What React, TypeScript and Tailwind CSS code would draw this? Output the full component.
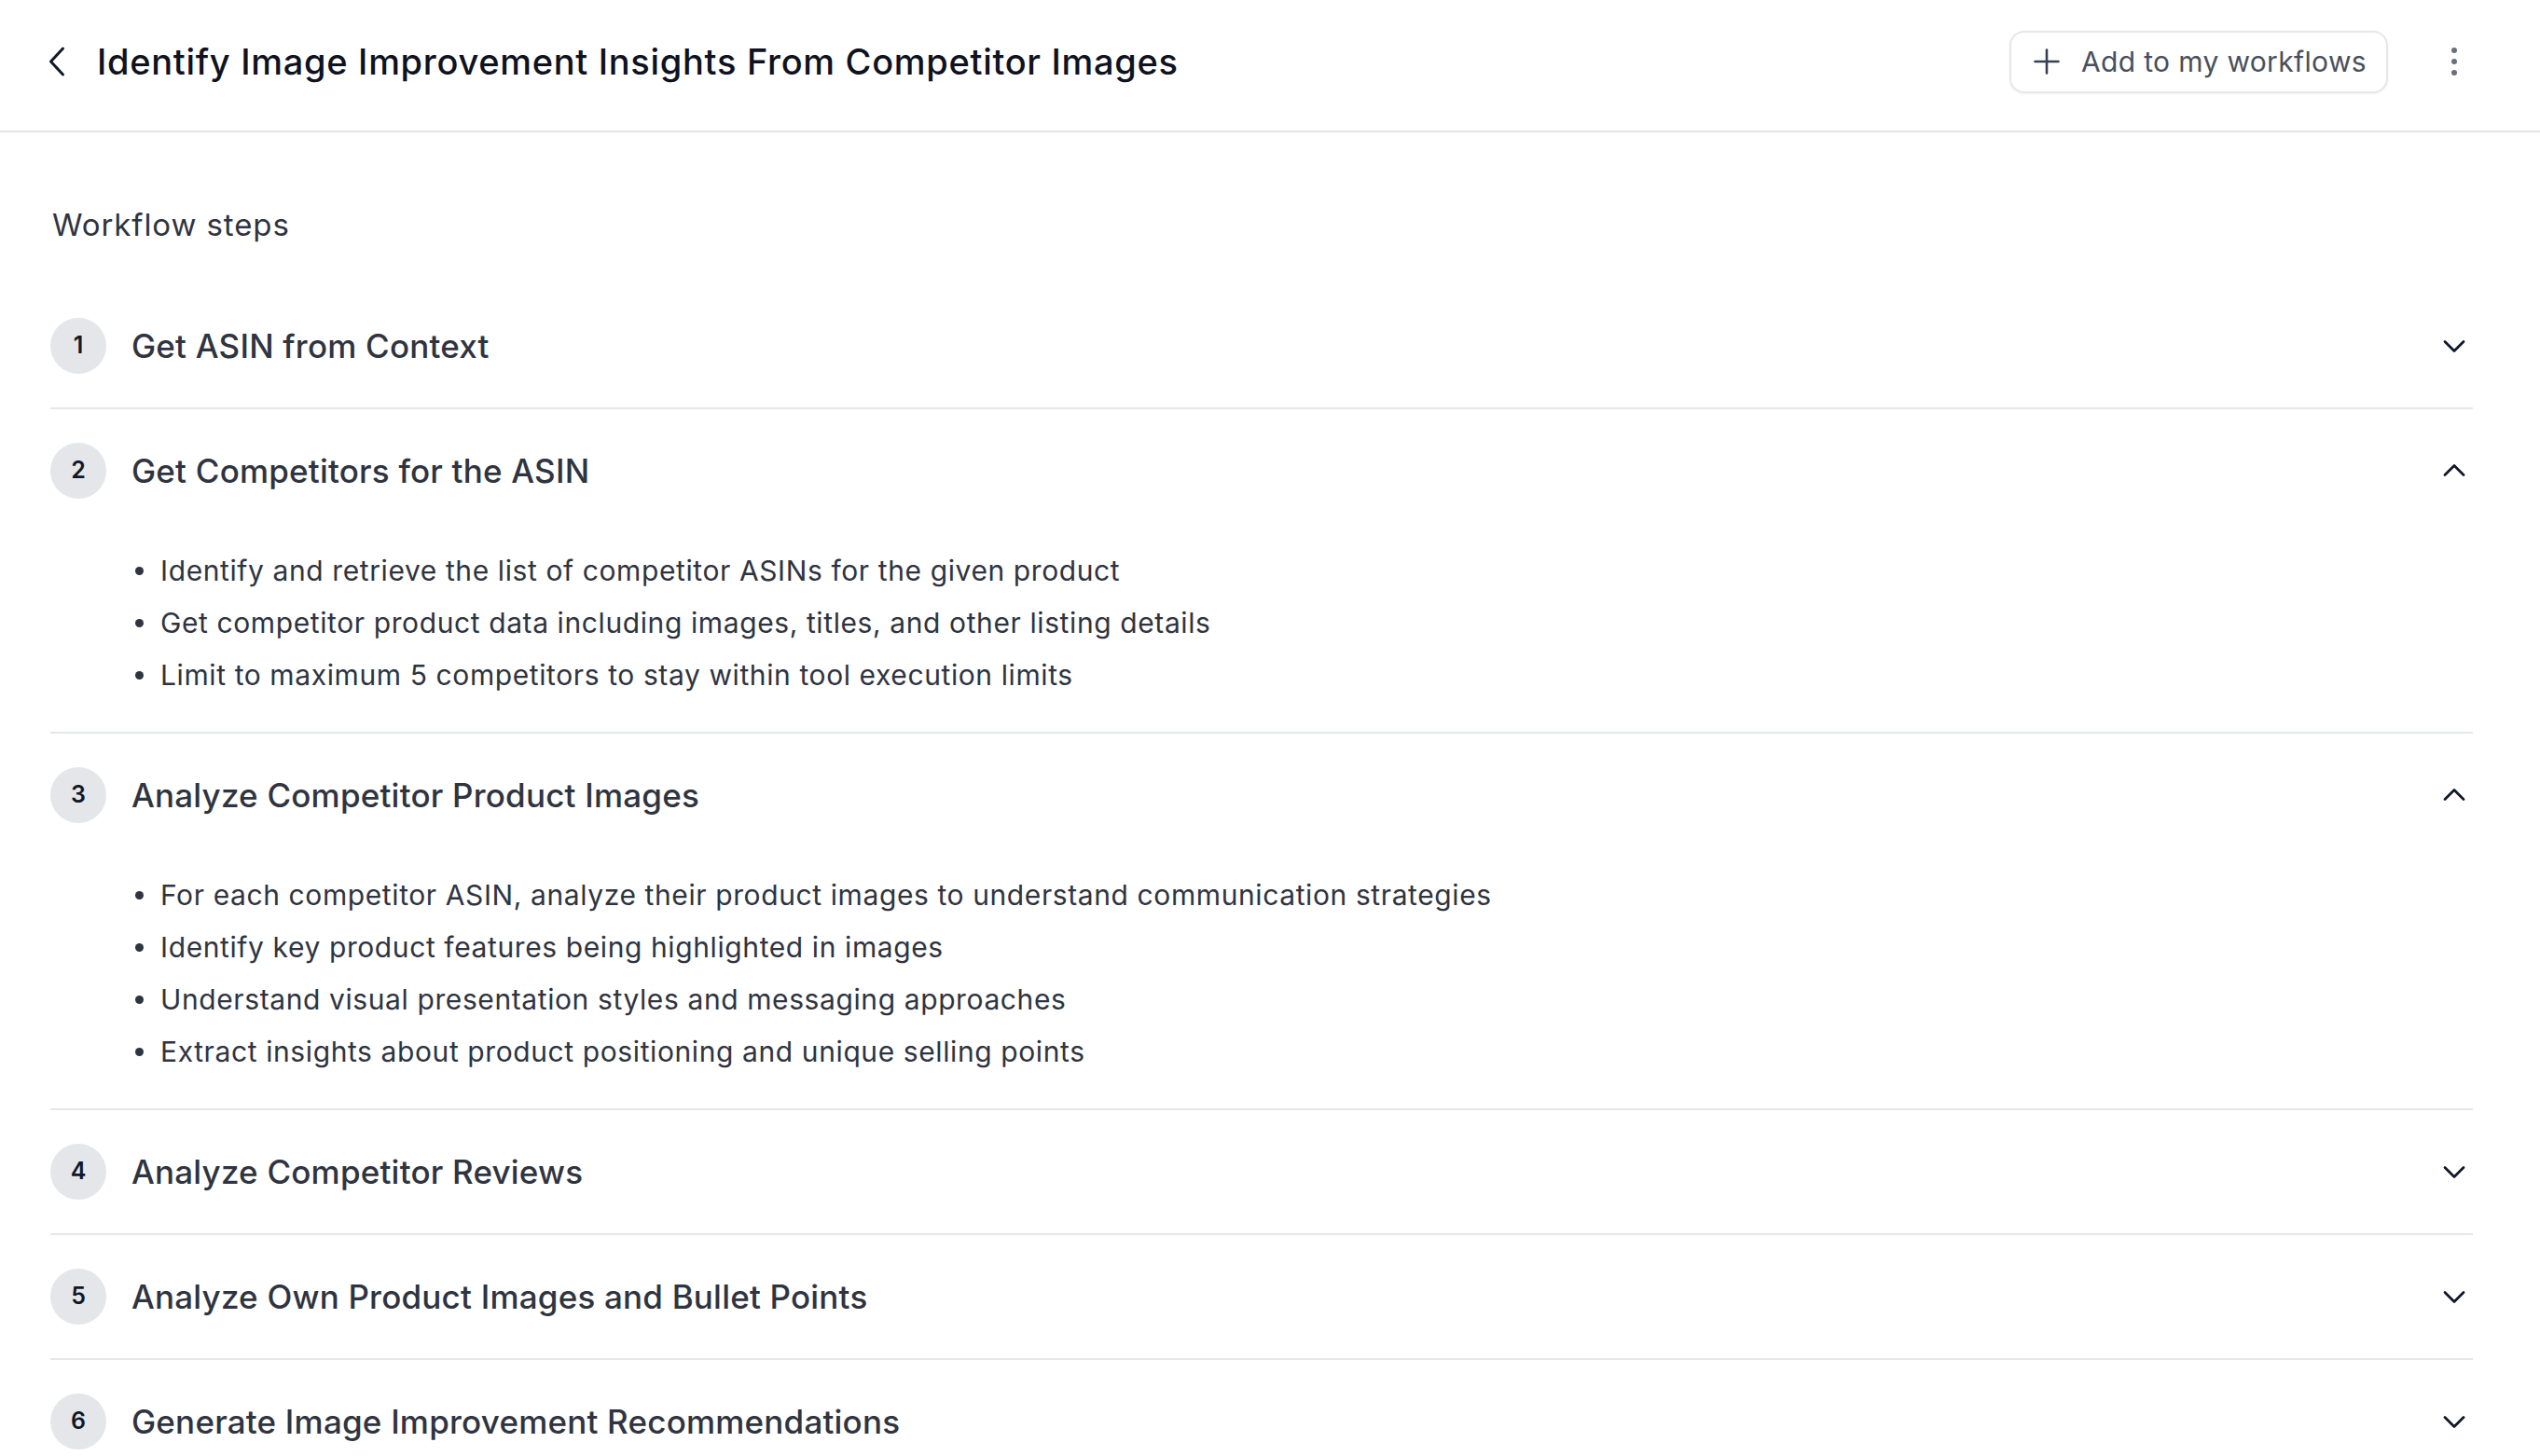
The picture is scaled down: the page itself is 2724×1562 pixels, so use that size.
import { useState } from "react";

type Step = {
  id: number;
  title: string;
  details: string[];
};

const steps: Step[] = [
  { id: 1, title: "Get ASIN from Context", details: [] },
  {
    id: 2,
    title: "Get Competitors for the ASIN",
    details: [
      "Identify and retrieve the list of competitor ASINs for the given product",
      "Get competitor product data including images, titles, and other listing details",
      "Limit to maximum 5 competitors to stay within tool execution limits",
    ],
  },
  {
    id: 3,
    title: "Analyze Competitor Product Images",
    details: [
      "For each competitor ASIN, analyze their product images to understand communication strategies",
      "Identify key product features being highlighted in images",
      "Understand visual presentation styles and messaging approaches",
      "Extract insights about product positioning and unique selling points",
    ],
  },
  { id: 4, title: "Analyze Competitor Reviews", details: [] },
  { id: 5, title: "Analyze Own Product Images and Bullet Points", details: [] },
  { id: 6, title: "Generate Image Improvement Recommendations", details: [] },
];

function Chevron({ up }: { up?: boolean }) {
  return (
    <svg width="28" height="28" viewBox="0 0 28 28" fill="none">
      <path
        d={up ? "M4 18.5 L14 8.5 L24 18.5" : "M4 9.5 L14 19.5 L24 9.5"}
        stroke="#111827"
        strokeWidth="2.8"
        strokeLinecap="round"
        strokeLinejoin="round"
      />
    </svg>
  );
}

function StepRow({
  step,
  open,
  onToggle,
}: {
  step: Step;
  open: boolean;
  onToggle: () => void;
}) {
  return (
    <div className="border-b-2 border-[#e5e7eb]">
      <button
        onClick={onToggle}
        className="flex h-[132px] w-full items-center text-left"
      >
        <span className="flex h-[60px] w-[60px] shrink-0 items-center justify-center rounded-full bg-[#e5e6ea] text-[25px] font-semibold text-[#111827]">
          {step.id}
        </span>
        <span className="ml-[27px] flex-1 text-[35px] font-medium tracking-[0.2px] text-[#2f3440]">
          {step.title}
        </span>
        <span className="mr-[6px] flex">
          <Chevron up={open} />
        </span>
      </button>
      {open && step.details.length > 0 && (
        <ul className="pb-[33px] pt-[13px]">
          {step.details.map((d) => (
            <li
              key={d}
              className="flex items-center text-[30px] leading-[56px] tracking-[0.6px] text-[#2f3440]"
            >
              <span className="ml-[91px] mr-[18px] h-[9px] w-[9px] shrink-0 rounded-full bg-[#2f3440]" />
              {d}
            </li>
          ))}
        </ul>
      )}
    </div>
  );
}

export default function App() {
  const [openIds, setOpenIds] = useState<number[]>([2, 3]);

  const toggle = (id: number) =>
    setOpenIds((ids) =>
      ids.includes(id) ? ids.filter((i) => i !== id) : [...ids, id]
    );

  return (
    <div className="min-h-screen bg-white font-['Inter','Noto_Sans',sans-serif]">
      <header className="flex h-[142px] items-center border-b-2 border-[#e5e5e5] pb-[8px] pl-[50px] pr-[78px]">
        <button className="flex">
          <svg width="24" height="36" viewBox="0 0 24 36" fill="none">
            <path
              d="M17.5 4 L4.5 18 L17.5 32"
              stroke="#111827"
              strokeWidth="3"
              strokeLinecap="round"
              strokeLinejoin="round"
            />
          </svg>
        </button>
        <h1 className="ml-[30px] flex-1 text-[38px] font-medium tracking-[0.7px] text-[#0f1220]">
          Identify Image Improvement Insights From Competitor Images
        </h1>
        <button className="flex h-[67px] items-center gap-[23px] rounded-[16px] border-2 border-[#e6e7ea] bg-white pl-[24px] pr-[21px] shadow-[0_1px_3px_rgba(0,0,0,0.06)]">
          <svg width="28" height="28" viewBox="0 0 28 28" fill="none">
            <path
              d="M14 1.5 V26.5 M1.5 14 H26.5"
              stroke="#374151"
              strokeWidth="2.6"
              strokeLinecap="round"
            />
          </svg>
          <span className="text-[30px] tracking-[0.35px] text-[#4a4f5c]">
            Add to my workflows
          </span>
        </button>
        <button className="ml-[57px] flex h-[40px] w-[28px] flex-col items-center justify-center gap-[6px]">
          <span className="h-[6px] w-[6px] rounded-full bg-[#6b6f7b]" />
          <span className="h-[6px] w-[6px] rounded-full bg-[#6b6f7b]" />
          <span className="h-[6px] w-[6px] rounded-full bg-[#6b6f7b]" />
        </button>
      </header>

      <main className="pl-[54px] pr-[72px] pt-[79px]">
        <h2 className="ml-[2px] text-[33px] leading-[40px] tracking-[0.9px] text-[#2f3440]">
          Workflow steps
        </h2>
        <div className="mt-[44px]">
          {steps.map((s) => (
            <StepRow
              key={s.id}
              step={s}
              open={openIds.includes(s.id)}
              onToggle={() => toggle(s.id)}
            />
          ))}
        </div>
      </main>
    </div>
  );
}
